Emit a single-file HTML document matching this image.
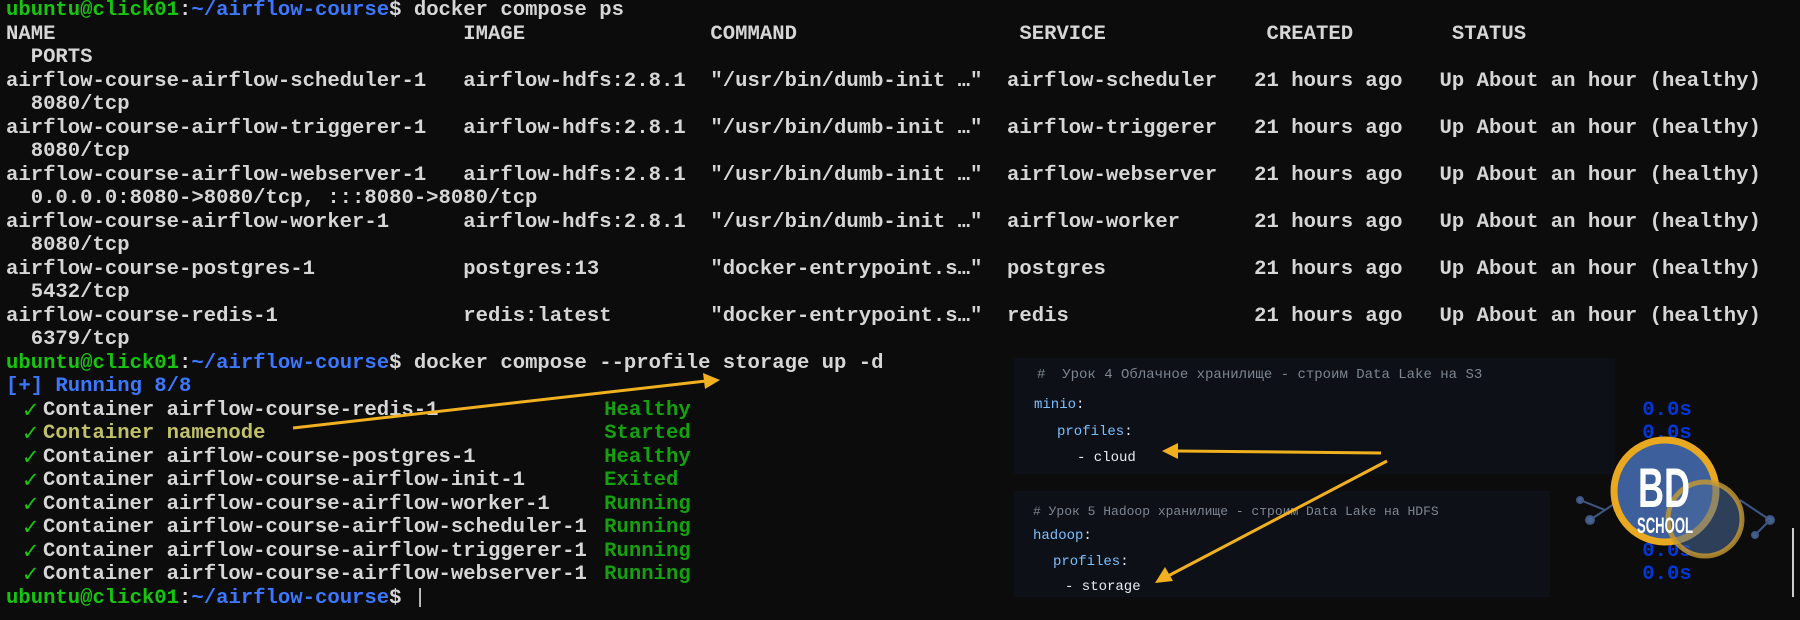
<!DOCTYPE html>
<html><head><meta charset="utf-8"><style>
html,body{margin:0;padding:0;background:#0c0c0c;width:1800px;height:620px;overflow:hidden;position:relative}
pre{position:absolute;left:6px;top:-1px;margin:0;font-family:"Liberation Mono",monospace;font-size:20.6px;line-height:23.52px;color:#d6d6d6;font-weight:bold;white-space:pre}
.g{color:#16c60c}.b{color:#3b78ff}.gr{color:#13a10e}.y{color:#c1c16a}.bl{color:#0037da}
.st{color:#13a10e;margin-left:5px}
.ck{display:inline-block;width:24.7px;height:20px;line-height:20px;vertical-align:top;margin-top:1px;color:#16c60c;font-family:"DejaVu Sans",sans-serif;font-size:21px;text-align:center;overflow:visible}
.box{position:absolute;background:#0d1117}
.t{position:absolute;font-family:"Liberation Mono","DejaVu Sans Mono",monospace;font-size:14px;white-space:pre;line-height:16px}
.c{color:#7d8590}.k{color:#79c0ff}.w{color:#e6edf3}
</style></head><body>
<pre><span class="g">ubuntu@click01</span>:<span class="b">~/airflow-course</span>$ docker compose ps
NAME                                 IMAGE               COMMAND                  SERVICE             CREATED        STATUS
  PORTS
airflow-course-airflow-scheduler-1   airflow-hdfs:2.8.1  "/usr/bin/dumb-init …"  airflow-scheduler   21 hours ago   Up About an hour (healthy)
  8080/tcp
airflow-course-airflow-triggerer-1   airflow-hdfs:2.8.1  "/usr/bin/dumb-init …"  airflow-triggerer   21 hours ago   Up About an hour (healthy)
  8080/tcp
airflow-course-airflow-webserver-1   airflow-hdfs:2.8.1  "/usr/bin/dumb-init …"  airflow-webserver   21 hours ago   Up About an hour (healthy)
  0.0.0.0:8080-&gt;8080/tcp, :::8080-&gt;8080/tcp
airflow-course-airflow-worker-1      airflow-hdfs:2.8.1  "/usr/bin/dumb-init …"  airflow-worker      21 hours ago   Up About an hour (healthy)
  8080/tcp
airflow-course-postgres-1            postgres:13         "docker-entrypoint.s…"  postgres            21 hours ago   Up About an hour (healthy)
  5432/tcp
airflow-course-redis-1               redis:latest        "docker-entrypoint.s…"  redis               21 hours ago   Up About an hour (healthy)
  6379/tcp
<span class="g">ubuntu@click01</span>:<span class="b">~/airflow-course</span>$ docker compose --profile storage up -d
<span class="b">[+] Running 8/8</span>
 <span class="ck">✓</span>Container airflow-course-redis-1             <span class="st">Healthy</span>                                                                             <span class="bl">0.0s</span>
 <span class="ck">✓</span><span class="y">Container namenode</span>                           <span class="st">Started</span>                                                                             <span class="bl">0.0s</span>
 <span class="ck">✓</span>Container airflow-course-postgres-1          <span class="st">Healthy</span>                                                                             <span class="bl">0.0s</span>
 <span class="ck">✓</span>Container airflow-course-airflow-init-1      <span class="st">Exited</span>                                                                              <span class="bl">0.0s</span>
 <span class="ck">✓</span>Container airflow-course-airflow-worker-1    <span class="st">Running</span>                                                                             <span class="bl">0.0s</span>
 <span class="ck">✓</span>Container airflow-course-airflow-scheduler-1 <span class="st">Running</span>                                                                             <span class="bl">0.0s</span>
 <span class="ck">✓</span>Container airflow-course-airflow-triggerer-1 <span class="st">Running</span>                                                                             <span class="bl">0.0s</span>
 <span class="ck">✓</span>Container airflow-course-airflow-webserver-1 <span class="st">Running</span>                                                                             <span class="bl">0.0s</span>
<span class="g">ubuntu@click01</span>:<span class="b">~/airflow-course</span>$ <span style="font-weight:normal">|</span></pre>

<div class="box" style="left:1014px;top:358px;width:601px;height:116px"></div>
<div class="box" style="left:1014px;top:491px;width:536px;height:106px"></div>
<div class="t c" style="left:1037px;top:367px">#  Урок 4 Облачное хранилище - строим Data Lake на S3</div>
<div class="t" style="left:1034px;top:397px"><span class="k">minio</span><span class="w">:</span></div>
<div class="t" style="left:1057px;top:424px"><span class="k">profiles</span><span class="w">:</span></div>
<div class="t w" style="left:1077px;top:450px">- cloud</div>
<div class="t c" style="left:1033px;top:504px;font-size:13px"># Урок 5 Hadoop хранилище - строим Data Lake на HDFS</div>
<div class="t" style="left:1033px;top:528px"><span class="k">hadoop</span><span class="w">:</span></div>
<div class="t" style="left:1053px;top:554px"><span class="k">profiles</span><span class="w">:</span></div>
<div class="t w" style="left:1065px;top:579px">- storage</div>

<svg width="1800" height="620" style="position:absolute;left:0;top:0">
<g stroke="#f0b020" stroke-width="3" fill="#f0b020">
<line x1="293" y1="428" x2="706" y2="381"/>
<polygon points="720,380 703,373 705,389" stroke="none"/>
<line x1="1381" y1="453" x2="1176" y2="451"/>
<polygon points="1162,451 1178,443 1178,459" stroke="none"/>
<line x1="1387" y1="461" x2="1168" y2="576"/>
<polygon points="1155,583 1165,567 1173,581" stroke="none"/>
</g>
<g stroke="#4a6aa0" stroke-width="2" fill="#5a7ab0" opacity="0.8">
<line x1="1590" y1="520" x2="1620" y2="500"/><circle cx="1590" cy="520" r="4"/><circle cx="1580" cy="500" r="3"/><line x1="1580" y1="500" x2="1605" y2="510"/>
<line x1="1740" y1="500" x2="1770" y2="520"/><circle cx="1770" cy="520" r="4"/><circle cx="1755" cy="535" r="3"/><line x1="1770" y1="520" x2="1755" y2="535"/>
</g>
<circle cx="1665" cy="491" r="51" fill="#3d5f9c" stroke="#e8a820" stroke-width="7"/>
<circle cx="1705" cy="519" r="37" fill="#4a6a9a" fill-opacity="0.55" stroke="#c89a30" stroke-width="5" stroke-opacity="0.8"/>
<text x="1664" y="507" fill="#fff" font-family="Liberation Sans" font-weight="bold" font-size="56" text-anchor="middle" textLength="52" lengthAdjust="spacingAndGlyphs">BD</text>
<text x="1665" y="533" fill="#fff" font-family="Liberation Sans" font-weight="bold" font-size="22" text-anchor="middle" textLength="56" lengthAdjust="spacingAndGlyphs">SCHOOL</text>
<line x1="1793" y1="528" x2="1793" y2="597" stroke="#ccc" stroke-width="2"/>
</svg>
</body></html>
